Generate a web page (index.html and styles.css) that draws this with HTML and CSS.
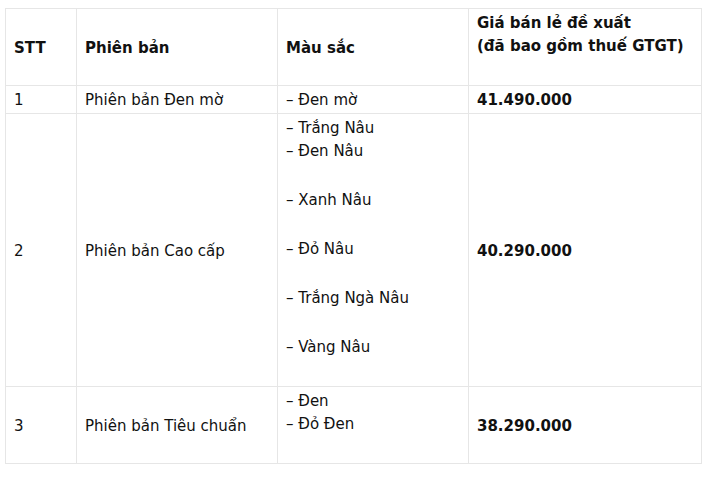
FILE: index.html
```html
<!DOCTYPE html>
<html lang="vi">
<head>
<meta charset="utf-8">
<link rel="stylesheet" href="styles.css">
</head>
<body>
<table class="price-table">
  <colgroup>
    <col class="c-stt">
    <col class="c-ver">
    <col class="c-color">
    <col class="c-price">
  </colgroup>
  <thead>
    <tr>
      <th>STT</th>
      <th>Phiên bản</th>
      <th>Màu sắc</th>
      <th><div class="line">Giá bán lẻ đề xuất</div><div class="line">(đã bao gồm thuế GTGT)</div><div class="tail"></div></th>
    </tr>
  </thead>
  <tbody>
    <tr>
      <td>1</td>
      <td>Phiên bản Đen mờ</td>
      <td>– Đen mờ</td>
      <td class="price">41.490.000</td>
    </tr>
    <tr>
      <td>2</td>
      <td>Phiên bản Cao cấp</td>
      <td>
        <div class="line">– Trắng Nâu</div>
        <div class="line">– Đen Nâu</div>
        <div class="line spaced">– Xanh Nâu</div>
        <div class="line spaced">– Đỏ Nâu</div>
        <div class="line spaced">– Trắng Ngà Nâu</div>
        <div class="line spaced">– Vàng Nâu</div>
        <div class="tail"></div>
      </td>
      <td class="price">40.290.000</td>
    </tr>
    <tr>
      <td>3</td>
      <td>Phiên bản Tiêu chuẩn</td>
      <td>
        <div class="line">– Đen</div>
        <div class="line">– Đỏ Đen</div>
        <div class="tail"></div>
      </td>
      <td class="price">38.290.000</td>
    </tr>
  </tbody>
</table>
</body>
</html>
```

FILE: styles.css
```css
html, body {
  margin: 0;
  background: #fff;
}
body {
  padding: 8px 0 0 5px;
  font-family: "DejaVu Sans", Verdana, sans-serif;
  font-size: 15px;
  color: #111;
}
.price-table {
  border-collapse: collapse;
  table-layout: fixed;
  width: 696px;
}
.c-stt { width: 71px; }
.c-ver { width: 201px; }
.c-color { width: 191px; }
.c-price { width: 233px; }
.price-table th,
.price-table td {
  border: 1px solid #e6e6e6;
  padding: 3px 8px 1px;
  line-height: 23px;
  text-align: left;
  vertical-align: middle;
}
.price-table th {
  font-weight: bold;
}
.line {
  min-height: 23px;
}
.tail {
  height: 26px;
}
.spaced {
  margin-top: 26px;
}
.price {
  font-weight: bold;
}
```
